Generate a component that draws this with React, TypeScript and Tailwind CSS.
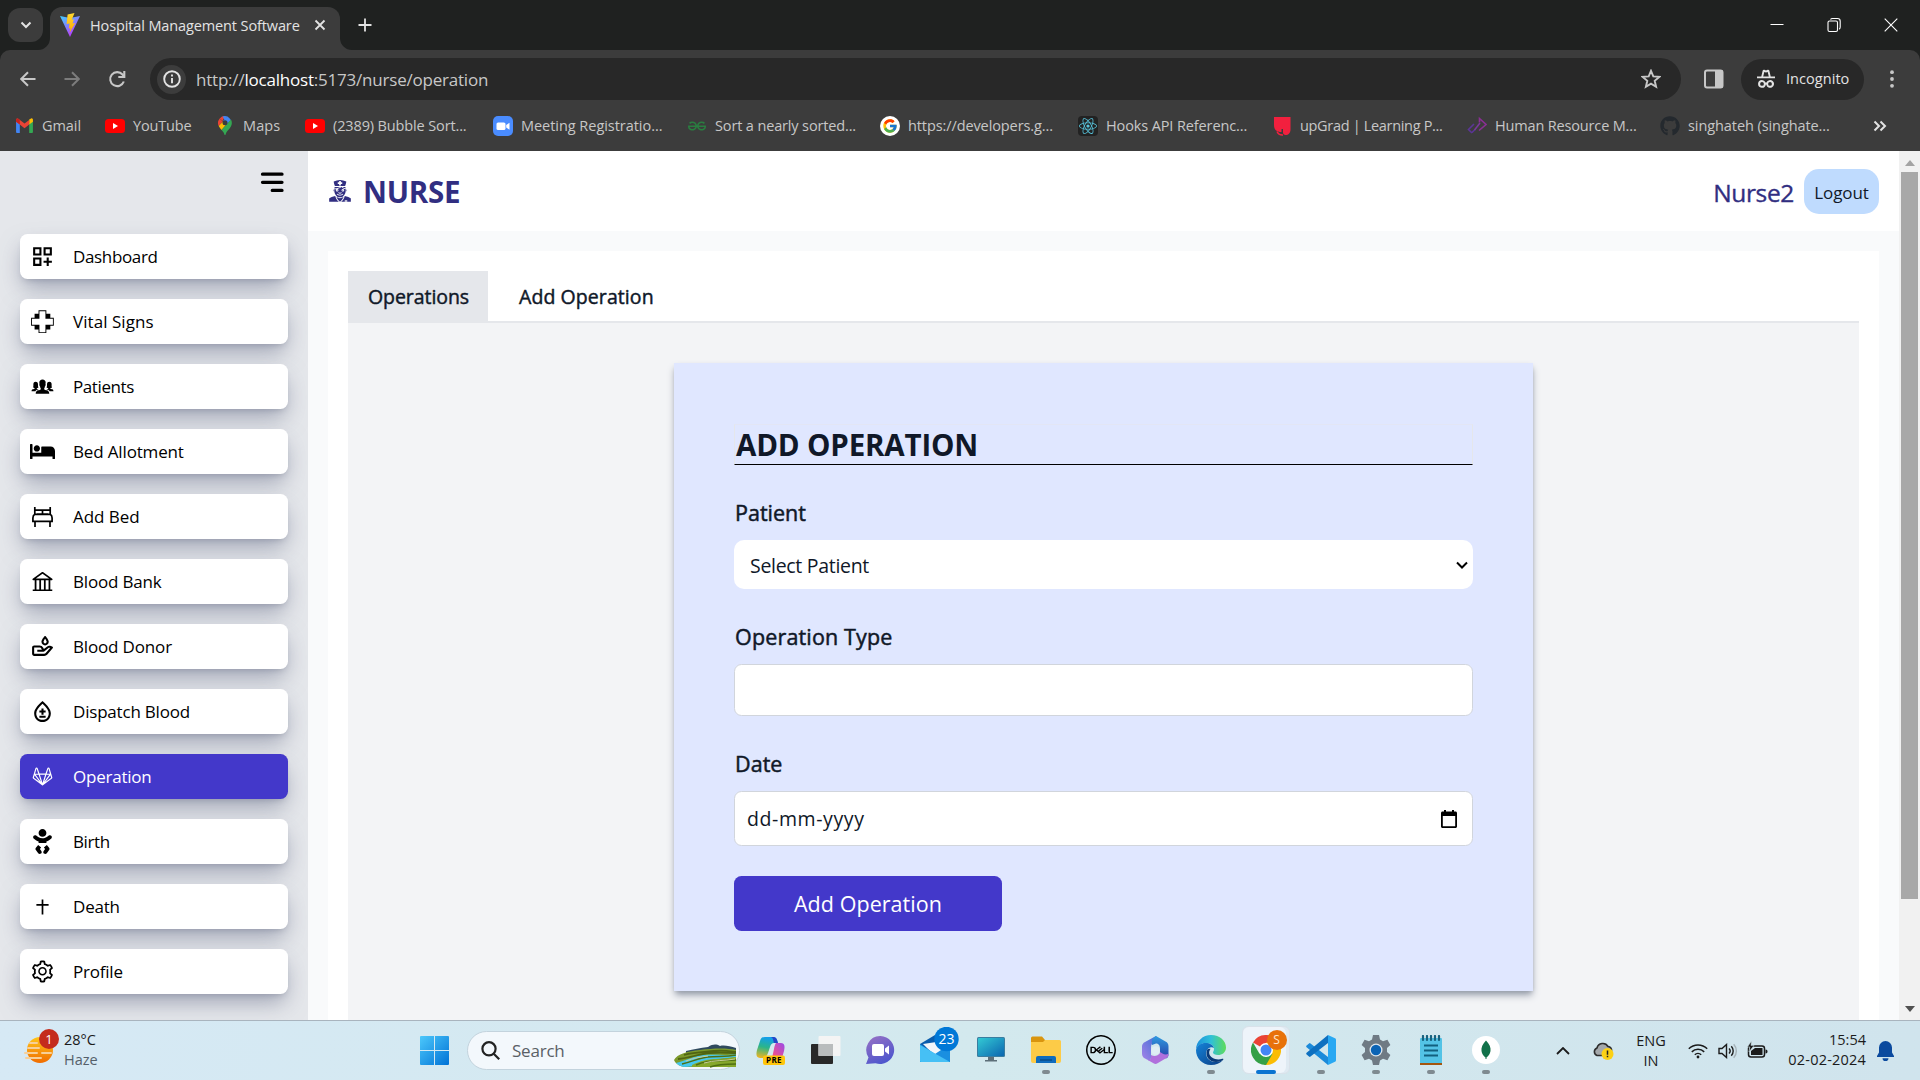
import React from "react";
import { MdOutlineDashboardCustomize, MdOutlineBloodtype } from "react-icons/md";
import { GiHospitalCross, GiNurseMale } from "react-icons/gi";
import { IoIosPeople } from "react-icons/io";
import { FaBed, FaBaby, FaReact, FaGithub } from "react-icons/fa";
import { AiOutlineBank, AiOutlineGitlab, AiOutlineSetting } from "react-icons/ai";
import { BiDonateBlood } from "react-icons/bi";
import { HiMenuAlt3 } from "react-icons/hi";
import { FcGoogle } from "react-icons/fc";
import { SiDell, SiGeeksforgeeks } from "react-icons/si";

/* ---------- Browser chrome ---------- */

const ViteLogo = () => (
  <svg viewBox="0 0 20 24" className="h-[24px] w-[20px]">
    <defs>
      <linearGradient id="vite-a" x1="0" y1="0" x2="0.6" y2="1">
        <stop offset="0" stopColor="#41d1ff" />
        <stop offset="1" stopColor="#bd34fe" />
      </linearGradient>
      <linearGradient id="vite-b" x1="0.5" y1="0" x2="0.5" y2="1">
        <stop offset="0" stopColor="#ffd930" />
        <stop offset="1" stopColor="#ffa800" />
      </linearGradient>
    </defs>
    <path d="M0 3l10 2 10-2-10 21z" fill="url(#vite-a)" />
    <path d="M14.5 0L7.6 1.4 6.6 11l3-.6-.8 5 1.7-.5-1 5.200 5.700-10-2.600.5 1.300-4.400-2.100.5z" fill="url(#vite-b)" />
  </svg>
);

const GmailLogo = () => (
  <svg viewBox="0 0 20 16" className="h-[15px] w-[19px]">
    <path d="M1 2.5L5 5.6V16H2a1 1 0 0 1-1-1z" fill="#4285f4" />
    <path d="M19 2.5L15 5.6V16h3a1 1 0 0 0 1-1z" fill="#34a853" />
    <path d="M15 1.6L17 .4c1.200-.5 2 .4 2 1.600V4l-4 3z" fill="#fbbc04" />
    <path d="M1 4V2C1 .6 2.200 0 3.400.8L10 5.800 15 2v5l-5 3.800L5 7z" fill="#ea4335" />
    <path d="M1 4V2C1 .8 2 .2 3 .5L5 2v5z" fill="#c5221f" />
  </svg>
);

const YouTubeLogo = () => (
  <svg viewBox="0 0 20 14" className="h-[14px] w-[20px]">
    <rect width="20" height="14" rx="3.500" fill="#f00" />
    <path d="M8 4l5 3-5 3z" fill="#fff" />
  </svg>
);

const MapsLogo = () => (
  <svg viewBox="0 0 14 19" className="mx-[3px] h-[19px] w-[14px]">
    <path d="M7 0a7 7 0 0 0-5.300 2.400L4.600 5z" fill="#ea4335" />
    <path d="M7 0c-1 0-1.700.2-2.500.5L7 4.500 9.500.5A7 7 0 0 0 7 0z" fill="#4285f4" />
    <path d="M9.200.4L4.800 5.200l4 3.500 4-4.800A7 7 0 0 0 9.200.4z" fill="#4285f4" />
    <path d="M1.700 2.400A7 7 0 0 0 .7 10l4.100-4.600z" fill="#ea4335" />
    <path d="M.7 10c.7 1.500 1.800 2.600 2.800 4l5.300-6L5 5.600z" fill="#fbbc04" />
    <path d="M13 3.500c2 4.200.2 7.300-2.500 10.300C8.700 15.800 8 17 7.500 18.700c-.2.400-.8.4-1 0-.4-1.700-1.300-3-3-4.700z" fill="#34a853" />
    <circle cx="7" cy="6.800" r="2.500" fill="#3c3c3c" />
  </svg>
);

const ZoomLogo = () => (
  <svg viewBox="0 0 20 20" className="h-5 w-5">
    <rect width="20" height="20" rx="5" fill="#4a8cff" />
    <rect x="3.500" y="6.500" width="9" height="7.500" rx="1.600" fill="#fff" />
    <path d="M13.200 9l3.300-2.300v7l-3.300-2.200z" fill="#fff" />
  </svg>
);

const UpgradLogo = () => (
  <svg viewBox="0 0 20 20" className="h-5 w-5">
    <path d="M2 1h16.500v12.500c0 3.500-2 5.500-5 5.500-1.500 0-2.500-1-2.500-2.500v-3.500H9.500V16C5 16 2 14 2 9z" fill="#f2203e" />
    <path d="M5 15.500c1 2.400 3.500 3.700 6 3.500" stroke="#f2203e" strokeWidth="1.500" fill="none" />
  </svg>
);

const CodeLogo = () => (
  <svg viewBox="0 0 20 20" className="h-5 w-5" fill="none" strokeWidth="1.600">
    <path d="M7 8l-5.500 5.500L5 17M5 16.500l3-3" stroke="#5b3596" />
    <path d="M7.500 14l5.500-7" stroke="#7a3a9a" />
    <path d="M12.500 6.500V2.500L19 8.500l-7 6" stroke="#8a2f93" />
  </svg>
);

const bookmarks = [
  { label: "Gmail", icon: <GmailLogo />, box: "w-[91px] tracking-[-0.07px]" },
  { label: "YouTube", icon: <YouTubeLogo />, box: "w-[110px] tracking-[-0.16px]" },
  { label: "Maps", icon: <MapsLogo />, box: "w-[90px] tracking-[0.1px]" },
  { label: "(2389) Bubble Sort...", icon: <YouTubeLogo />, box: "w-[188px] tracking-[-0.13px]" },
  { label: "Meeting Registratio...", icon: <ZoomLogo />, box: "w-[194px] tracking-[-0.04px]" },
  { label: "Sort a nearly sorted...", icon: <SiGeeksforgeeks className="size-[18px] text-[#2a7d40]" />, box: "w-[193px] tracking-[-0.14px]" },
  {
    label: "https://developers.g...",
    icon: (
      <span className="flex size-5 items-center justify-center rounded-full bg-white">
        <FcGoogle className="size-4" />
      </span>
    ),
    box: "w-[198px] tracking-[-0.1px]",
  },
  {
    label: "Hooks API Referenc...",
    icon: (
      <span className="flex size-5 items-center justify-center rounded-sm bg-[#222]">
        <FaReact className="size-[18px] text-[#58c4dc]" />
      </span>
    ),
    box: "w-[194px] tracking-[-0.12px]",
  },
  { label: "upGrad | Learning P...", icon: <UpgradLogo />, box: "w-[195px] tracking-[-0.32px]" },
  { label: "Human Resource M...", icon: <CodeLogo />, box: "w-[193px] tracking-[-0.16px]" },
  { label: "singhateh (singhate...", icon: <FaGithub className="size-5 text-[#24292e]" />, box: "w-[190px] tracking-[-0.08px]" },
];

const Titlebar = () => (
  <div className="flex h-[50px] items-end bg-[#1f2120] text-[#e3e3e3]">
    <button className="mb-2 ml-2 flex h-[34px] w-[35px] items-center justify-center rounded-xl bg-[#3c3c3c]">
      <svg viewBox="0 0 12 12" className="size-3" fill="none" stroke="currentColor" strokeWidth="2">
        <path d="M1.500 3.500L6 8l4.500-4.500" />
      </svg>
    </button>
    <svg viewBox="0 0 12 12" className="ml-[-5px] size-3" fill="#3c3c3c">
      <path d="M12 0v12H0A12 12 0 0 0 12 0z" />
    </svg>
    <div className="flex h-[43px] w-[290px] items-center rounded-t-xl bg-[#3c3c3c] pb-[7px] pl-[10px]">
      <ViteLogo />
      <span className="ml-[10px] w-[219px] whitespace-nowrap pt-px text-[14.500px] tracking-[-0.12px]">Hospital Management Software</span>
      <svg viewBox="0 0 12 12" className="ml-[5px] size-3" stroke="currentColor" strokeWidth="1.800">
        <path d="M1.500 1.500l9 9M10.500 1.500l-9 9" />
      </svg>
    </div>
    <svg viewBox="0 0 12 12" className="size-3" fill="#3c3c3c">
      <path d="M0 0v12h12A12 12 0 0 1 0 0z" />
    </svg>
    <svg viewBox="0 0 14 14" className="mb-[18px] ml-[6px] size-[14px]" stroke="currentColor" strokeWidth="1.800">
      <path d="M7 .5v13M.5 7h13" />
    </svg>
    <div className="mb-[17px] ml-auto flex items-center gap-[43px] pr-[22px]">
      <svg viewBox="0 0 14 16" className="h-4 w-[14px]" stroke="#fff" strokeWidth="1">
        <path d="M.5 7.500h13" />
      </svg>
      <svg viewBox="0 0 14 16" className="h-4 w-[14px]" stroke="#fff" strokeWidth="1.100" fill="none">
        <rect x="1" y="4" width="9.500" height="10.500" rx="1.500" />
        <path d="M3.500 2.500C4 1.700 4.600 1.500 5.500 1.500h5c1.600 0 2.700 1 2.700 2.700V10c0 1-.3 1.700-1 2.200" />
      </svg>
      <svg viewBox="0 0 14 16" className="h-4 w-[14px]" stroke="#fff" strokeWidth="1.100">
        <path d="M.7 1.700l12.600 12.600M13.300 1.700L.7 14.300" />
      </svg>
    </div>
  </div>
);

const Toolbar = () => (
  <div className="flex h-[58px] items-center rounded-t-[10px] bg-[#3c3c3c] text-[#c7c7c7]">
    <svg viewBox="0 0 16 16" className="ml-[20px] size-4" fill="none" stroke="currentColor" strokeWidth="2">
      <path d="M15.500 8H1.500M8 1.200L1.200 8 8 14.800" />
    </svg>
    <svg viewBox="0 0 16 16" className="ml-[28px] size-4" fill="none" stroke="#7c7c7c" strokeWidth="2">
      <path d="M.5 8h14M8 1.200L14.800 8 8 14.800" />
    </svg>
    <svg viewBox="0 0 18 18" className="ml-[28px] size-[18px]" fill="none" stroke="currentColor" strokeWidth="2.100">
      <path d="M15.800 11.500A7 7 0 1 1 14.500 4.500l1.500 1.800" />
      <path d="M16.300 1v6h-6" />
    </svg>
    <div className="ml-[24px] flex h-[42px] w-[1531px] items-center rounded-full bg-[#282828] pl-[7px] pr-[20px]">
      <span className="flex size-[29px] items-center justify-center rounded-full bg-[#3c3c3c]">
        <svg viewBox="0 0 18 18" className="size-[18px]" fill="none" stroke="#e3e3e3" strokeWidth="1.900">
          <circle cx="9" cy="9" r="7.800" />
          <path d="M9 8v5.200M9 4.600v2" />
        </svg>
      </span>
      <span className="ml-[10px] whitespace-nowrap pt-px text-[17px] tracking-[-0.21px] text-[#c7c7c7]">
        http://<span className="text-white">localhost</span>:5173/nurse/operation
      </span>
      <svg viewBox="0 0 20 20" className="ml-auto size-5" fill="none" stroke="currentColor" strokeWidth="1.900">
        <path d="M10 1.800l2.300 5.600 6 .5-4.600 3.900 1.400 5.900L10 14.600l-5.100 3.100 1.400-5.900L1.700 7.900l6-.5z" />
      </svg>
    </div>
    <svg viewBox="0 0 20 20" className="ml-[23px] size-5">
      <rect x="1" y="1.500" width="17.500" height="17" rx="2" fill="none" stroke="currentColor" strokeWidth="2" />
      <rect x="11" y="1.500" width="8" height="17" fill="currentColor" />
    </svg>
    <div className="ml-[17px] flex h-[41px] w-[123px] items-center rounded-full bg-[#282828] text-[#e3e3e3]">
      <svg viewBox="0 0 20 20" className="ml-[15px] size-5" fill="currentColor">
        <path d="M6.700 1.500c.3-.8 1-1 1.700-.7l1.600.6 1.600-.6c.700-.3 1.400-.1 1.700.7L14.700 7.500H19v1.800H1V7.500h4.300zM8.300 3L7.200 7.500h5.600L11.700 3l-1.700.5z" fillRule="evenodd" />
        <path d="M6 11a3.900 3.900 0 1 0 3.800 4.700c.2-.2.300-.2.500 0A3.900 3.900 0 1 0 10.500 13.500h-1A3.900 3.900 0 0 0 6 11zm0 2a1.900 1.900 0 1 1 0 3.800A1.900 1.900 0 0 1 6 13zm8 0a1.900 1.900 0 1 1 0 3.800A1.900 1.900 0 0 1 14 13z" fillRule="evenodd" />
      </svg>
      <span className="ml-[10px] text-[14.500px] tracking-[0.05px]">Incognito</span>
    </div>
    <svg viewBox="0 0 4 18" className="ml-[26px] h-[18px] w-1" fill="currentColor">
      <circle cx="2" cy="2.200" r="1.900" />
      <circle cx="2" cy="9" r="1.900" />
      <circle cx="2" cy="15.800" r="1.900" />
    </svg>
  </div>
);

const Bookmarks = () => (
  <div className="flex h-[43px] items-center bg-[#3c3c3c] pb-[8px] pl-[14px] text-[14.500px] text-[#c7c7c7]">
    {bookmarks.map((b) => (
      <div key={b.label} className={`flex shrink-0 items-center gap-2 whitespace-nowrap ${b.box}`}>
        <span className="flex w-5 shrink-0 justify-center">{b.icon}</span>
        <span>{b.label}</span>
      </div>
    ))}
    <svg viewBox="0 0 14 12" className="ml-[23px] h-3 w-[14px]" fill="none" stroke="#e3e3e3" strokeWidth="2">
      <path d="M1.500 1.500L6 6l-4.500 4.500M7.500 1.500L12 6l-4.500 4.500" />
    </svg>
  </div>
);

/* ---------- Sidebar ---------- */

const DoubleBed = () => (
  <svg viewBox="0 0 21 20" className="h-5 w-[21px]" fill="none" stroke="currentColor" strokeWidth="1.700">
    <path d="M2.800 0v7.800M18.200 0v7.800M2.800 3.200h15.400M10.500 3.200V7M4.800 7h11.400M2.800 7.300C1.500 8 .9 9.500.9 11v3.400h19.200V11c0-1.500-.6-3-1.900-3.700zM3 14.400V20M18 14.400V20" />
  </svg>
);

const LatinCross = () => (
  <svg viewBox="0 0 13 16" className="h-4 w-[13px]" fill="none" stroke="currentColor" strokeWidth="1.700">
    <path d="M6.500.5v15M.4 5.800h12.200" />
  </svg>
);

const menu = [
  { label: "Dashboard", icon: <MdOutlineDashboardCustomize />, track: "tracking-[-0.35px]" },
  { label: "Vital Signs", icon: <GiHospitalCross />, track: "tracking-[0.05px]" },
  { label: "Patients", icon: <IoIosPeople />, track: "tracking-[-0.4px]" },
  { label: "Bed Allotment", icon: <FaBed />, track: "tracking-[-0.15px]" },
  { label: "Add Bed", icon: <DoubleBed />, track: "tracking-[-0.05px]" },
  { label: "Blood Bank", icon: <AiOutlineBank />, track: "tracking-[-0.18px]" },
  { label: "Blood Donor", icon: <BiDonateBlood />, track: "tracking-[-0.16px]" },
  { label: "Dispatch Blood", icon: <MdOutlineBloodtype />, track: "tracking-[-0.2px]" },
  { label: "Operation", icon: <AiOutlineGitlab />, track: "tracking-[-0.23px]", active: true },
  { label: "Birth", icon: <FaBaby />, track: "tracking-[-0.4px]" },
  { label: "Death", icon: <LatinCross />, track: "tracking-[-0.2px]" },
  { label: "Profile", icon: <AiOutlineSetting />, track: "tracking-[-0.22px]" },
];

const Sidebar = () => (
  <aside className="flex w-[308px] shrink-0 flex-col bg-gray-200 px-5">
    <div className="flex h-[83px] shrink-0 justify-end pt-[15px]">
      <HiMenuAlt3 className="size-[32.500px] text-black" />
    </div>
    <nav className="flex flex-col gap-5">
      {menu.map((m) => (
        <a
          key={m.label}
          className={`flex h-[45px] shrink-0 items-center rounded-[7.500px] pl-[9.500px] shadow-[0_11px_22px_-3px_rgba(107,114,140,0.580),0_4px_6px_-4px_rgba(107,114,128,0.450)] ${
            m.active ? "bg-[#4338ca] text-white" : "bg-white text-black"
          }`}
        >
          <span className="flex size-[25px] items-center justify-center text-[25px]">{m.icon}</span>
          <span className={`ml-[18.500px] pt-px text-[17px] ${m.track}`}>{m.label}</span>
        </a>
      ))}
    </nav>
  </aside>
);

/* ---------- Main content ---------- */

const PageHeader = () => (
  <header className="flex h-20 shrink-0 items-center justify-between bg-white px-5 text-[#312e81]">
    <h1 className="flex items-center gap-[11px] text-[29.500px] font-bold tracking-[-0.22px]">
      <GiNurseMale className="size-6" />
      <span className="pt-[3px]">NURSE</span>
    </h1>
    <div className="flex items-center gap-[10px] pt-px">
      <span className="pt-[4px] text-[24.500px] tracking-[-0.35px] [-webkit-text-stroke:0.350px]">Nurse2</span>
      <button className="h-[45px] w-[75px] rounded-[15px] bg-[#bfdbfe] pt-[2px] text-[17px] tracking-[-0.1px] text-gray-900">Logout</button>
    </div>
  </header>
);

const OperationForm = () => (
  <form className="flex h-[628px] w-[859px] shrink-0 flex-col bg-[#e0e7ff] px-[60px] pt-[61px] text-gray-900 shadow-[0_5px_7.500px_-1px_#9ca3af,0_2.500px_5px_-2.500px_#6b7280]">
    <h2 className="h-[41px] border border-b-[#000] border-l-gray-200 border-r-gray-200 border-t-[#e3e6f5] pl-px text-[29.500px] font-bold leading-[40px] tracking-[-0.17px]">ADD OPERATION</h2>

    <label className="mt-[32px] h-[43px] pl-px text-[21.500px] leading-[32px] tracking-[0px] [-webkit-text-stroke:0.500px]">Patient</label>
    <div className="flex h-[49px] shrink-0 items-center justify-between rounded-[10px] bg-white pl-[16px] pr-[5px] text-[19.500px] tracking-[-0.3px]">
      <span className="pt-[2px]">Select Patient</span>
      <svg viewBox="0 0 12 12" className="size-3" fill="none" stroke="#000" strokeWidth="2">
        <path d="M1 3.500l5 5 5-5" />
      </svg>
    </div>

    <label className="mt-[32px] h-[43px] pl-px text-[21.500px] leading-[31px] tracking-[0.16px] [-webkit-text-stroke:0.500px]">Operation Type</label>
    <input className="h-[52px] shrink-0 rounded-[7.500px] border border-gray-300 bg-white" />

    <label className="mt-[32px] h-[43px] pl-px text-[21.500px] leading-[31px] tracking-[0.05px] [-webkit-text-stroke:0.500px]">Date</label>
    <div className="flex h-[55px] shrink-0 items-center justify-between rounded-[7.500px] border border-gray-300 bg-white pl-[12px] pr-[15px] text-[19.500px] tracking-[0.6px]">
      <span className="pt-px">dd-mm-yyyy</span>
      <svg viewBox="0 0 16 18" className="h-[18px] w-4 text-black" fill="currentColor">
        <path d="M3 0h2v1.500h6V0h2v1.500h1.500c.8 0 1.500.7 1.500 1.500v13.500c0 .8-.7 1.500-1.500 1.500h-13C.7 18 0 17.300 0 16.500V3c0-.8.7-1.500 1.500-1.500H3zM1.800 6v10.200h12.400V6z" fillRule="evenodd" />
      </svg>
    </div>

    <button type="button" className="mt-[30px] h-[55px] w-[268px] shrink-0 rounded-[7.500px] bg-[#4338ca] pt-[2px] text-[21.500px] tracking-[0.05px] text-white">
      Add Operation
    </button>
  </form>
);

const Scrollbar = () => (
  <div className="flex w-[21px] shrink-0 flex-col items-center bg-[#f1f1f1] pb-[8px] pt-[9px]">
    <svg viewBox="0 0 10 6" className="h-[6px] w-[10px] shrink-0" fill="#a3a3a3">
      <path d="M5 0l5 6H0z" />
    </svg>
    <div className="mt-[6px] h-[727px] w-[17px] shrink-0 bg-[#a8a8a8]" />
    <svg viewBox="0 0 10 6" className="mt-auto h-[6px] w-[10px] shrink-0" fill="#505050">
      <path d="M5 6L0 0h10z" />
    </svg>
  </div>
);

const Content = () => (
  <main className="flex min-w-0 flex-1 flex-col bg-gray-50">
    <PageHeader />
    <section className="mx-5 mt-5 flex min-h-0 flex-1 flex-col bg-white px-5 pt-5">
      <div className="flex h-[52px] shrink-0 border-b-2 border-gray-200 text-[19.500px] text-gray-900 [-webkit-text-stroke:0.450px]">
        <div className="flex h-[52px] w-[140px] items-center justify-center bg-gray-200 pl-px tracking-[-0.06px]">Operations</div>
        <div className="ml-[11px] flex h-[52px] items-center px-5 tracking-[0.08px]">Add Operation</div>
      </div>
      <div className="flex min-h-0 flex-1 justify-center bg-gray-100 pt-10">
        <OperationForm />
      </div>
    </section>
  </main>
);

/* ---------- Taskbar ---------- */

const WeatherIcon = () => (
  <svg viewBox="0 0 36 36" className="size-9">
    <defs>
      <linearGradient id="sun" x1="0" y1="0" x2="0" y2="1">
        <stop offset="0" stopColor="#ffc61a" />
        <stop offset="1" stopColor="#f06c00" />
      </linearGradient>
    </defs>
    <circle cx="16" cy="21" r="13" fill="url(#sun)" />
    <path d="M6 14h7M1 24h12M4 19h11M18 24h9M2 29h15" stroke="#f7cf98" strokeWidth="2" strokeLinecap="round" />
    <circle cx="25" cy="10" r="10" fill="#c42b1c" />
  </svg>
);

const StartIcon = () => (
  <svg viewBox="0 0 29 29" className="size-[29px]">
    <defs>
      <linearGradient id="win" gradientUnits="userSpaceOnUse" x1="0" y1="0" x2="29" y2="29">
        <stop offset="0" stopColor="#4cc8fb" />
        <stop offset="1" stopColor="#0072d6" />
      </linearGradient>
    </defs>
    <path d="M1 0h13v14H0V1a1 1 0 0 1 1-1zM15 0h13a1 1 0 0 1 1 1v13H15zM0 15h14v14H1a1 1 0 0 1-1-1zM15 15h14v13a1 1 0 0 1-1 1H15z" fill="url(#win)" />
  </svg>
);

const RiceFields = () => (
  <svg viewBox="0 0 62 24" className="h-6 w-[62px]">
    <path d="M12 7c8-2 14-3 22-4 5-3 8-3 12-1 4-1 10 0 16 2v5H12z" fill="#2f4a5e" />
    <path d="M0 16C3 10 14 7 26 6c14-2 28-2 36 0v17H10C5 22 1 19 0 16z" fill="#7c9a2c" />
    <path d="M2 19c10-2 16-7 28-8 11-1 22 1 32-1v3c-12 2-22 1-30 4-6 3-12 6-22 6-4-1-6-2-8-4z" fill="#45c7ee" />
    <path d="M10 11c10-3 20-3 30-4s14 0 22 1M4 15c12-1 20-5 32-6s18 0 26 0" stroke="#4f6412" strokeWidth="1.800" fill="none" />
    <path d="M18 21c8-4 16-6 26-6 8 0 12-1 18-2v10H18z" fill="#86a82c" />
    <path d="M8 20c10-2 16-6 26-7 10-1 18 0 28-2M22 21c10-5 20-4 40-5M36 23c8-3 16-3 26-3" stroke="#4f6f12" strokeWidth="1.500" fill="none" />
    <path d="M12 17c8-3 14-4 22-5M30 19c10-3 20-2 31-4" stroke="#c9cf98" strokeWidth="1" fill="none" />
  </svg>
);

const CopilotIcon = () => (
  <div className="relative size-[29px]">
    <svg viewBox="0 0 29 29" className="size-[29px]">
      <defs>
        <linearGradient id="cp-a" x1="0.300" y1="0" x2="0.100" y2="1">
          <stop offset="0" stopColor="#139fe8" />
          <stop offset="0.450" stopColor="#2bb58a" />
          <stop offset="1" stopColor="#f6b41c" />
        </linearGradient>
        <linearGradient id="cp-b" x1="1" y1="0" x2="0" y2="1">
          <stop offset="0" stopColor="#9a4be8" />
          <stop offset="0.600" stopColor="#ef4f8f" />
          <stop offset="1" stopColor="#f98a3c" />
        </linearGradient>
      </defs>
      <path d="M9 1h8c3 0 4 2 5 6h-4c-2 0-3 1-4 4l-2 6c-1 3-3 5-6 5H4c-4 0-4-4-3-8L4 5c1-3 2-4 5-4z" fill="url(#cp-a)" />
      <path d="M15 1h3c2 0 3 2 4 6h-4c-1-4-1-5-3-6z" fill="#2546c8" />
      <path d="M20 7h5c4 0 4 4 3 8l-2 7c-1 4-3 6-6 6h-9c3-1 4-3 5-6l2-9c.600-3 .8-4 2-6z" fill="url(#cp-b)" />
      <rect x="7" y="19.500" width="22" height="9.500" rx="2" fill="#ffc60b" />
    </svg>
    <span className="absolute bottom-0 left-[7px] w-[22px] text-center text-[8px] font-bold leading-[10px] tracking-[0.400px] text-black">PRE</span>
  </div>
);

const TaskViewIcon = () => (
  <svg viewBox="0 0 30 28" className="h-7 w-[30px]">
    <rect x="0" y="8" width="22" height="20" rx="1" fill="#282828" />
    <rect x="7.500" y="0" width="22" height="20" rx="1" fill="#f4f4f4" />
    <rect x="7.500" y="8" width="14.500" height="12" fill="#b9bcbd" />
  </svg>
);

const ChatIcon = () => (
  <svg viewBox="0 0 29 28" className="h-7 w-[29px]">
    <defs>
      <linearGradient id="chat" x1="0" y1="0" x2="0.500" y2="1">
        <stop offset="0" stopColor="#9a72c4" />
        <stop offset="1" stopColor="#5057cd" />
      </linearGradient>
    </defs>
    <path d="M14.500 0a14 14 0 1 1-5 27.200L0 28l2.500-6.500A14 14 0 0 1 14.500 0z" fill="url(#chat)" />
    <rect x="6" y="8" width="12" height="12" rx="2" fill="#fff" />
    <path d="M19 12.500l4-3v9l-4-3z" fill="#fff" />
  </svg>
);

const MailIcon = () => (
  <div className="relative h-9 w-[39px]">
    <svg viewBox="0 0 39 36" className="h-9 w-[39px]">
      <path d="M0 17L15 8l15 9v18H0z" fill="#0a5dad" />
      <path d="M3 17l20-3 5 8-13 7z" fill="#f2f6fa" />
      <path d="M0 17l15 10L30 17v17a1 1 0 0 1-1 1H1a1 1 0 0 1-1-1z" fill="#1a8fe0" />
      <path d="M0 18l30 17H1a1 1 0 0 1-1-1z" fill="#46c0f5" />
      <circle cx="26.500" cy="12" r="12.200" fill="#0078d7" />
    </svg>
    <span className="absolute right-0 top-0 w-[25px] text-center text-[14px] leading-6 text-white">23</span>
  </div>
);

const MonitorIcon = () => (
  <svg viewBox="0 0 28 30" className="h-[30px] w-7">
    <defs>
      <linearGradient id="screen" x1="0" y1="0" x2="1" y2="1">
        <stop offset="0" stopColor="#33c9d4" />
        <stop offset="1" stopColor="#0b66b0" />
      </linearGradient>
    </defs>
    <rect x="0" y="2" width="28" height="20" rx="1.500" fill="#3a7da0" />
    <rect x="1" y="3" width="26" height="18" rx="1" fill="url(#screen)" />
    <path d="M11 22h6v3h3v1.500H8V25h3z" fill="#5d6f79" />
  </svg>
);

const FolderIcon = () => (
  <svg viewBox="0 0 30 28" className="h-7 w-[30px]">
    <path d="M0 2a1.500 1.500 0 0 1 1.500-1.500H11L14 4v5H0z" fill="#d9950f" />
    <path d="M0 6h12l2-2h14.500A1.500 1.500 0 0 1 30 5.500V25a2 2 0 0 1-2 2H2a2 2 0 0 1-2-2z" fill="#fdcb47" />
    <path d="M5 27v-5a2 2 0 0 1 2-2h16a2 2 0 0 1 2 2v5z" fill="#0f6cbd" />
    <path d="M9 24h12" stroke="#0a4c8a" strokeWidth="1.500" />
  </svg>
);

const M365Icon = () => (
  <svg viewBox="0 0 27 28" className="h-7 w-[27px]">
    <defs>
      <linearGradient id="m-a" x1="1" y1="0" x2="0" y2="1">
        <stop offset="0" stopColor="#3b6fd6" />
        <stop offset="1" stopColor="#a583e8" />
      </linearGradient>
      <linearGradient id="m-b" x1="0" y1="0" x2="0" y2="1">
        <stop offset="0" stopColor="#2f9be0" />
        <stop offset="1" stopColor="#2740a8" />
      </linearGradient>
    </defs>
    <path d="M14 0L3 6C1 7 0 8.500 0 10.500v7C0 20 1 21.500 3 22.500l4 2c2-1 2-2 2-4v-9c0-3 1-4 3-5l4-2z" fill="url(#m-a)" />
    <path d="M14 0c-2.500 1.500-4 3-4 5.500V9l4-1.500c3 0 4 2.500 4 5V19l6 3.500c2-1 2.500-2.500 2.500-4.500v-7.500c0-2.500-1-4-3-5z" fill="url(#m-b)" />
    <path d="M3 22.500L11.500 27.300c1.500.8 2.500.8 4 0l8.500-5c2-1 2.500-2.500 2.500-4.500-2 1-4 1-6.500-.5l-2-1.300c0 1.500-1 2.500-2.500 3.200-2 1-4 1-6.500-.2V21c0 2-1 3-3 3z" fill="#b070dc" />
    <circle cx="13.500" cy="14.500" r="4.300" fill="#dfeef4" />
  </svg>
);

const EdgeIcon = () => (
  <svg viewBox="0 0 30 30" className="size-[30px]">
    <defs>
      <linearGradient id="edge-a" x1="0" y1="0.300" x2="1" y2="0.300">
        <stop offset="0" stopColor="#1c8fdc" />
        <stop offset="0.500" stopColor="#2fc0d8" />
        <stop offset="1" stopColor="#5fdc5a" />
      </linearGradient>
      <linearGradient id="edge-b" x1="0" y1="0" x2="1" y2="1">
        <stop offset="0" stopColor="#1583d8" />
        <stop offset="1" stopColor="#0b3f86" />
      </linearGradient>
    </defs>
    <path d="M0 15C0 6 7 0 15 0c9 0 15 6 15 12.500 0 5-4 7.500-8 7.500-3 0-5-1-5-2.500 0-1 1-1.500 1-3.500 0-3-3-6-8-6C5 8 1 11 0 15z" fill="url(#edge-a)" />
    <path d="M0 15C1 10.500 5 8 9.500 8 14 8 17 10 18 13c-2-1.500-6-1-7.500 3-1.500 5 2 11 9 11 3 0 5-.7 7.500-2-3 3.500-7 5-12 5C6 30 0 23 0 15z" fill="url(#edge-b)" />
    <path d="M11 15c-2 6 2 12 9 12 3 0 5-.7 7-2 .800-.6.300-1.500-.7-1.200-6 2-12-1-13-5-.4-2 .3-3.500 1.200-5-1.500 0-2.800.2-3.500 1.200z" fill="#0a3a78" />
  </svg>
);

const ChromeIcon = () => (
  <div className="relative flex h-12 w-[48px] items-center rounded-md border border-[#d9e2ea] bg-[#dfeaf2]">
    <div className="flex h-[46px] w-[43px] items-center rounded-md bg-[#eef4fa] pl-[8px]">
      <svg viewBox="0 0 30 30" className="size-[30px]">
        <path d="M15 15L2 7.500A15 15 0 0 1 28 7.500z" fill="#ea4335" />
        <path d="M28 7.500H15V15l-2 15h2A15 15 0 0 0 28 7.500z" fill="#fbbc04" />
        <path d="M2 7.500A15 15 0 0 0 15 30l6.500-11.200L15 15 8.500 18.800z" fill="#34a047" />
        <circle cx="15" cy="15" r="7" fill="#fff" />
        <circle cx="15" cy="15" r="5.500" fill="#4285f4" />
      </svg>
    </div>
    <span className="absolute right-[2px] top-[3px] flex size-5 items-center justify-center rounded-full bg-[#e8710a] text-[12px] text-[#fde6cf]">S</span>
  </div>
);

const VsCodeIcon = () => (
  <svg viewBox="0 0 30 30" className="size-[30px]">
    <path d="M22 30v-8L4.500 8.400a1.200 1.200 0 0 0-1.500 0L.6 10.600a1.200 1.200 0 0 0 0 1.700z" fill="#1b8ada" />
    <path d="M22 0v8L4.500 21.600a1.200 1.200 0 0 1-1.500 0L.6 19.400a1.200 1.200 0 0 1 0-1.700z" fill="#0e70c0" />
    <path d="M22 0l7 3.300a1.500 1.500 0 0 1 1 1.400v20.600a1.500 1.500 0 0 1-1 1.400L22 30z" fill="#29a8f2" />
  </svg>
);

const GearIcon = () => (
  <svg viewBox="0 0 30 30" className="size-[30px]">
    <path d="M12 0h6l1 4.500 3 1.700 4.400-1.500 3 5.200-3.400 3.100v4l3.400 3.100-3 5.200-4.400-1.500-3 1.700-1 4.500h-6l-1-4.500-3-1.700-4.400 1.500-3-5.200L4 17v-4L.6 9.900l3-5.200L8 6.200l3-1.700z" fill="#6f7a84" />
    <circle cx="15" cy="15" r="6.500" fill="#dfe6ec" />
    <circle cx="15" cy="15" r="5.200" fill="#0c63b4" />
  </svg>
);

const NotepadIcon = () => (
  <svg viewBox="0 0 24 31" className="h-[31px] w-6">
    <rect x="1" y="3" width="22" height="26" rx="1" fill="#53c3e6" />
    <path d="M1 28h22v2H1z" fill="#a4560f" />
    <path d="M5 10.500h14M5 15.500h14M5 20.500h14" stroke="#12607f" strokeWidth="2" />
    <path d="M4 1v4M8 1v4M12 1v4M16 1v4M20 1v4" stroke="#17627f" strokeWidth="2.200" strokeLinecap="round" />
  </svg>
);

const MongoIcon = () => (
  <svg viewBox="0 0 28 28" className="size-7">
    <circle cx="14" cy="14" r="14" fill="#fff" />
    <path d="M14 4.500c3.500 3.800 5 7 4.500 10.500-.4 3-2 5-4 6.500V23h-1v-1.500c-2-1.500-3.600-3.500-4-6.500C9 11.500 10.500 8.300 14 4.500z" fill="#12724a" />
  </svg>
);

const apps = [
  { name: "copilot", icon: <CopilotIcon />, open: false },
  { name: "task-view", icon: <TaskViewIcon />, open: false },
  { name: "chat", icon: <ChatIcon />, open: false },
  { name: "mail", icon: <div className="flex pb-[10px] pl-[8px]"><MailIcon /></div>, open: false },
  { name: "desktop", icon: <MonitorIcon />, open: false },
  { name: "explorer", icon: <FolderIcon />, open: true },
  { name: "dell", icon: <SiDell className="size-[30px] text-black" />, open: false },
  { name: "m365", icon: <M365Icon />, open: false },
  { name: "edge", icon: <EdgeIcon />, open: true },
  { name: "chrome", icon: <ChromeIcon />, open: true, focused: true },
  { name: "vscode", icon: <VsCodeIcon />, open: true },
  { name: "settings", icon: <GearIcon />, open: true },
  { name: "notepad", icon: <NotepadIcon />, open: true },
  { name: "mongo", icon: <MongoIcon />, open: true },
];

const Taskbar = () => (
  <footer className="flex h-[60px] shrink-0 items-center border-t border-[#a9b4be] bg-linear-to-r from-[#d6e9f5] via-[#d3e9ee] to-[#d0e4ed] text-[14.500px] text-[#1b1b1b]">
    <div className="flex w-[420px] items-center pl-[24px]">
      <div className="relative mt-[-7px]">
        <WeatherIcon />
        <span className="absolute left-[15px] top-0 w-5 text-center text-[13px] leading-5 text-white">1</span>
      </div>
      <div className="ml-[4px] mt-[-2px] leading-[20px]">
        <div>28°C</div>
        <div className="text-[#55606a]">Haze</div>
      </div>
    </div>
    <StartIcon />
    <div className="ml-[18px] flex h-[39px] w-[273px] items-center rounded-full border border-[#c3d3dd] bg-[#f3f8fc] pl-[13px] pr-[3px]">
      <svg viewBox="0 0 19 19" className="size-[19px]" fill="none" stroke="#222" strokeWidth="2.200">
        <circle cx="8" cy="7.800" r="6.600" />
        <path d="M12.700 12.700l5.500 5.500" />
      </svg>
      <span className="ml-[12px] text-[17px] tracking-[-0.22px] text-[#5a6066]">Search</span>
      <div className="ml-auto mt-[10px]">
        <RiceFields />
      </div>
    </div>
    <div className="ml-[3px] flex">
      {apps.map((a) => (
        <div key={a.name} className="relative flex h-[59px] w-[55px] items-center justify-center pb-px">
          {a.icon}
          {a.open && (
            <span
              className={
                a.focused
                  ? "absolute bottom-[6px] h-1 w-5 rounded-full bg-[#0b74d1]"
                  : "absolute bottom-[6px] h-1 w-[8px] rounded-full bg-[#7f8a90]"
              }
            />
          )}
        </div>
      ))}
    </div>
    <svg viewBox="0 0 14 8" className="ml-[43px] h-2 w-[14px]" fill="none" stroke="#1b1b1b" strokeWidth="1.800">
      <path d="M1 7l6-6 6 6" />
    </svg>
    <svg viewBox="0 0 22 18" className="ml-[22px] h-[18px] w-[22px]">
      <path d="M5 13.500a4 4 0 0 1 0-7.500 6 6 0 0 1 11-1.500c2.500.3 4 2 3.500 4.500L13 13.500z" fill="#a4a8ab" stroke="#2d2d2d" strokeWidth="1.600" />
      <circle cx="15.500" cy="12" r="6" fill="#fcd116" />
      <path d="M15.500 8.500v4.200M15.500 13.700v1.600" stroke="#222" strokeWidth="1.500" />
    </svg>
    <div className="ml-[22px] w-[30px] text-center leading-[20px]">
      <div>ENG</div>
      <div>IN</div>
    </div>
    <svg viewBox="0 0 20 16" className="ml-[22px] h-4 w-5" fill="none" stroke="#1b1b1b" strokeWidth="1.500">
      <path d="M.8 5.800a13 13 0 0 1 18.400 0M3.800 8.900a8.800 8.800 0 0 1 12.400 0M6.800 11.700a4.600 4.600 0 0 1 6.400 0" />
      <circle cx="10" cy="14" r="1.400" fill="#1b1b1b" stroke="none" />
    </svg>
    <svg viewBox="0 0 20 16" className="ml-[10px] h-4 w-5" fill="none" stroke="#1b1b1b" strokeWidth="1.400">
      <path d="M1 5.500h3L8.500 1.500v13L4 10.500H1z" />
      <path d="M11 5.500a3.600 3.600 0 0 1 0 5M13.300 3.300a6.800 6.800 0 0 1 0 9.400" />
      <path d="M15.700 1.200a10 10 0 0 1 0 13.600" stroke="#a6b2b8" />
    </svg>
    <svg viewBox="0 0 21 17" className="mb-[3px] ml-[9px] h-[17px] w-[21px]">
      <rect x="1.500" y="5" width="16" height="11" rx="2.500" fill="none" stroke="#1b1b1b" strokeWidth="1.500" />
      <path d="M8 7h7.500v7H4v-4z" fill="#1b1b1b" />
      <path d="M18.500 8.500c1.500 0 2 .8 2 2s-.5 2-2 2z" fill="#1b1b1b" />
      <path d="M4.500 0L.3 6h2.500L2 11l5-6.500H4z" fill="#1b1b1b" stroke="#d1e5ec" strokeWidth=".6" />
    </svg>
    <div className="ml-auto mt-[-2px] text-right leading-[20px]">
      <div>15:54</div>
      <div className="tracking-[0.200px]">02-02-2024</div>
    </div>
    <svg viewBox="0 0 17 20" className="ml-[11px] mr-[26px] h-5 w-[17px]" fill="#0b4a9e">
      <path d="M8.500 0a6.500 6.500 0 0 1 6.500 6.500v5l2 3.500v1H0v-1l2-3.500v-5A6.500 6.500 0 0 1 8.500 0zM5.500 17.200h6a3 3 0 0 1-6 0z" />
    </svg>
  </footer>
);

export default function App() {
  return (
    <div className="flex h-[1080px] w-[1920px] flex-col overflow-hidden bg-[#1f2120] font-['Open_Sans','Noto_Sans',sans-serif]">
      <Titlebar />
      <Toolbar />
      <Bookmarks />
      <div className="flex h-[869px] shrink-0 overflow-hidden">
        <Sidebar />
        <Content />
        <Scrollbar />
      </div>
      <Taskbar />
    </div>
  );
}
